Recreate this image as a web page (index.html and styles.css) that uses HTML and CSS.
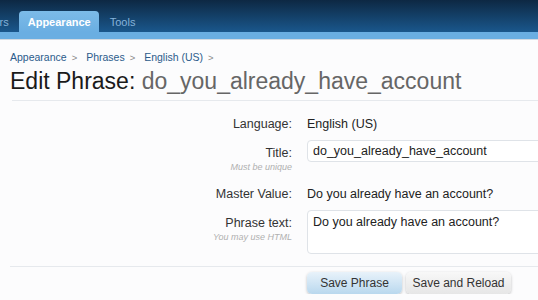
FILE: index.html
```html
<!DOCTYPE html>
<html lang="en">
<head>
  <meta charset="UTF-8" />
  <title>Edit Phrase</title>
  <link rel="stylesheet" href="styles.css">
</head>
<body>

  <div class="header">
    <div class="tabs">
      <span class="tab">Users</span>
      <span class="tab active">Appearance</span>
      <span class="tab">Tools</span>
    </div>
  </div>
  <div class="subbar"></div>

  <div class="content">
    <div class="crumbs">
      <a href="#">Appearance</a><span class="sep">&gt;</span>
      <a href="#">Phrases</a><span class="sep">&gt;</span>
      <a href="#">English (US)</a><span class="sep">&gt;</span>
    </div>

    <h1>Edit Phrase: <span class="phrase">do_you_already_have_account</span></h1>

    <form class="edit-form">
      <div class="row">
        <div class="label">Language:</div>
        <div class="value">English (US)</div>
      </div>
      <div class="row">
        <div class="label">Title:<small>Must be unique</small></div>
        <div class="value"><input type="text" class="text-input" value="do_you_already_have_account"></div>
      </div>
      <div class="row">
        <div class="label">Master Value:</div>
        <div class="value">Do you already have an account?</div>
      </div>
      <div class="row">
        <div class="label">Phrase text:<small>You may use HTML</small></div>
        <div class="value"><textarea class="text-area">Do you already have an account?</textarea></div>
      </div>

      <div class="actions">
        <button type="submit" class="btn primary">Save Phrase</button>
        <button type="button" class="btn">Save and Reload</button>
      </div>
    </form>
  </div>

</body>
</html>
```

FILE: styles.css
```css
body {
  margin: 0;
  font-family: "Liberation Sans", Arial, sans-serif;
  font-size: 12.5px;
  color: #222;
  background: #fcfcfd;
  overflow: hidden;
}
.header {
  height: 32px;
  background: linear-gradient(to bottom, #0d2843, #1a578c);
  display: flex;
  align-items: flex-end;
  overflow: hidden;
}
.tabs {
  display: flex;
  margin-left: -30px;
}
.tab {
  font-size: 11px;
  color: #86b3da;
  padding: 0 10px;
  height: 21px;
  line-height: 22px;
}
.tab.active {
  background: linear-gradient(to bottom, #7cbbe8, #6aaee2);
  color: #fff;
  font-weight: bold;
  border-radius: 4px 4px 0 0;
  padding: 0 8px 0 9px;
  margin-right: 1px;
}
.subbar {
  height: 7px;
  background: #6aaee2;
  border-bottom: 1px solid #d4dbe3;
}
.content {
  padding: 0 0 0 10px;
}
.crumbs {
  font-size: 10.5px;
  margin-top: 11px;
  color: #2b5b8b;
}
.crumbs a {
  color: #2b5b8b;
  text-decoration: none;
}
.crumbs .sep {
  color: #888;
  font-size: 9.5px;
  margin: 0 6px 0 5px;
}
h1 {
  font-size: 23px;
  font-weight: normal;
  color: #1a1a1a;
  margin: 5px 0 0 2px;
  padding: 0 0 5px 0;
  border-bottom: 1px solid #e6e9ed;
  text-indent: -2px;
}
.phrase {
  color: #666;
}
.edit-form {
  padding-top: 10px;
}
.row {
  display: grid;
  grid-template-columns: 282px 1fr;
  column-gap: 15px;
  margin-bottom: 9px;
}
.label {
  text-align: right;
  color: #333;
  padding-top: 6px;
}
.label small {
  display: block;
  font-size: 9px;
  font-style: italic;
  color: #b0b0b0;
  margin-top: 2px;
}
.value {
  padding-top: 6px;
  color: #222;
}
.value:has(input), .value:has(textarea) {
  padding-top: 0;
}
.text-input, .text-area {
  font-family: "Liberation Sans", Arial, sans-serif;
  font-size: 12.5px;
  color: #222;
  width: calc(100% + 10px);
  box-sizing: border-box;
  border: 1px solid #dfe3e8;
  border-radius: 4px;
  background: #fff;
  padding: 3px 5px;
}
.text-input {
  height: 22px;
}
.text-area {
  height: 44px;
  resize: none;
  padding-top: 4px;
  display: block;
}
.actions {
  border-top: 1px solid #e6e9ed;
  margin-top: 12px;
  padding: 5px 0 0 297px;
  display: flex;
  gap: 4px;
}
.btn {
  font-family: "Liberation Sans", Arial, sans-serif;
  font-size: 12px;
  color: #333;
  width: 105px;
  height: 22px;
  padding: 0;
  border: none;
  border-radius: 5px;
  background: linear-gradient(to bottom, #f8f8f8, #e6e6e6);
  box-shadow: 0 1px 3px rgba(0, 0, 0, 0.25);
}
.btn.primary {
  width: 95px;
  background: linear-gradient(to bottom, #e8f2fa, #b9d8ee);
}
```
